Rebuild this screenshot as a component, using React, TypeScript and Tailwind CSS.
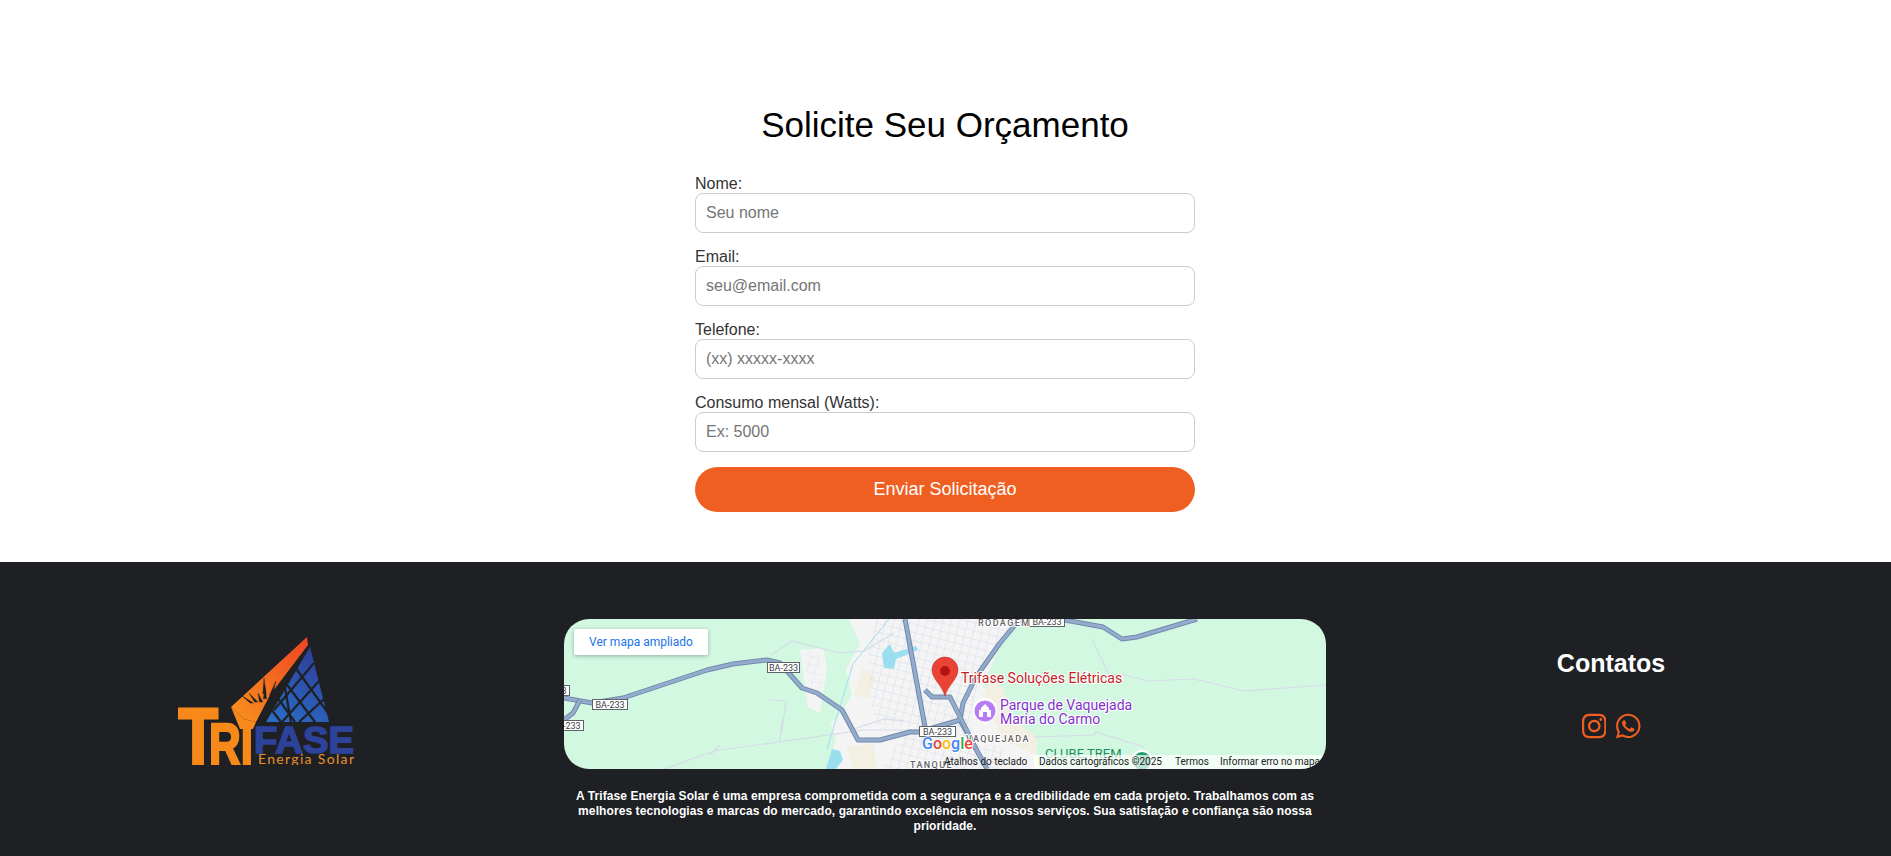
import { FaInstagram, FaWhatsapp } from "react-icons/fa"

const fields = [
  { label: "Nome:", placeholder: "Seu nome" },
  { label: "Email:", placeholder: "seu@email.com" },
  { label: "Telefone:", placeholder: "(xx) xxxxx-xxxx" },
  { label: "Consumo mensal (Watts):", placeholder: "Ex: 5000" },
]

const routeBadges = [
  { x: 203, y: 43, w: 32 },
  { x: 28, y: 80, w: 35 },
  { x: -16, y: 101, w: 35 },
  { x: -30, y: 66, w: 35 },
  { x: 355, y: 107, w: 36 },
  { x: 465, y: -3, w: 35 },
]

const mainRoads = [
  "M0 79 L28 84 L59 79 L143 51 L169 45 L203 41 L216 44 L238 69 L253 74 L278 91 L294 121 L316 121 L346 113 L372 113",
  "M16 81 L9 94 L0 101",
  "M341 0 L361 108",
  "M456 0 L436 24 L412 58 L399 84 L396 101 L423 150",
  "M361 71 L368 78 L386 78 L399 104 L412 130",
  "M355 113 L396 101",
  "M501 1 L539 8 L558 20 L573 18 L633 0",
]

const minorRoads = [
  "M100 150 L150 132 L300 111 L360 111",
  "M146 136 L156 126",
  "M205 81 L222 82 L218 112 M218 100 L216 122",
  "M470 118 L530 116 L532 113 L580 128",
  "M528 20 L545 56 L560 56 L585 62 L630 60 L680 72 L762 66",
  "M207 36 L228 22 L275 34 L300 32 L330 14",
  "M290 110 L320 100 L340 102",
]

function MapView() {
  return (
    <div className="relative h-[150px] w-[762px] overflow-hidden rounded-[25px] bg-[#d3f8e2]">
      <svg width="762" height="150" viewBox="0 0 762 150" className="block" fontFamily="Roboto, sans-serif">
        <defs>
          <pattern id="streets" width="8" height="8" patternUnits="userSpaceOnUse" patternTransform="rotate(14)">
            <path d="M8 0H0V8" fill="none" stroke="#d3dbe8" strokeWidth="1" />
          </pattern>
        </defs>

        {/* city area */}
        <path
          d="M285 0 L459 0 L436 24 L419 68 L446 100 L473 118 L473 150 L262 150 L272 120 L266 105 L276 96 L288 76 L282 50 L296 25 Z"
          fill="#f4f4f4"
        />
        <path d="M236 31 L259 29 L263 50 L256 94 L244 88 L240 60 Z" fill="#f4f4f4" />
        <path d="M298 50 L312 58 L304 80 L290 76 Z M282 128 L310 124 L312 150 L290 150 Z M425 60 L440 70 L448 100 L473 118 L473 136 L440 122 L420 80 Z" fill="#f3efe2" />

        {/* street grid */}
        <path
          d="M312 0 L450 0 L432 30 L415 64 L405 104 L416 125 L440 128 L440 150 L318 150 L335 122 L345 108 L310 104 L306 70 L304 40 Z"
          fill="url(#streets)"
        />
        <path d="M240 34 L256 32 L258 80 L246 76 Z" fill="url(#streets)" opacity="0.7" />

        {/* water */}
        <path d="M262 150 L268 130 L276 132 L279 141 L272 150 Z" fill="#9adff0" />
        <path d="M318 34 L326 25 L330 34 L352 27 L354 31 L332 40 L330 50 L320 49 Z" fill="#9adff0" />
        <path d="M263 130 L289 45 L325 0" fill="none" stroke="#9adff0" strokeWidth="1" />

        {minorRoads.map((d, i) => (
          <path key={i} d={d} fill="none" stroke="#d5dbe9" strokeWidth="1.2" />
        ))}

        {mainRoads.map((d, i) => (
          <g key={i}>
            <path d={d} fill="none" stroke="#7389aa" strokeWidth="5" strokeLinejoin="round" />
            <path d={d} fill="none" stroke="#93abcd" strokeWidth="3" strokeLinejoin="round" />
          </g>
        ))}

        {routeBadges.map((b, i) => (
          <g key={i}>
            <rect x={b.x + 0.5} y={b.y + 0.5} width={b.w} height="10" fill="#fff" stroke="#5f6368" />
            <text x={b.x + b.w / 2 + 0.5} y={b.y + 9} fontSize="9" fill="#3c4043" textAnchor="middle">
              BA-233
            </text>
          </g>
        ))}

        <g fontSize="9" fill="#5f6368" letterSpacing="1.4" fontWeight="500" stroke="#fff" strokeWidth="2" paintOrder="stroke">
          <text x="414" y="7">RODAGEM</text>
          <text x="402" y="123">VAQUEJADA</text>
          <text x="346" y="149">TANQUE</text>
        </g>

        {/* labels */}
        <text x="397" y="64" fontSize="14" fill="#c5221f" stroke="#fff" strokeWidth="2" paintOrder="stroke">
          Trifase Soluções Elétricas
        </text>
        <g fontSize="14" fill="#8430ce" stroke="#fff" strokeWidth="2" paintOrder="stroke">
          <text x="436" y="91">Parque de Vaquejada</text>
          <text x="436" y="105">Maria do Carmo</text>
        </g>
        <text x="481" y="139" fontSize="13" fill="#1e8e5e">CLUBE TREM</text>
        <circle cx="578" cy="142" r="10" fill="#1e9e6f" stroke="#fff" strokeWidth="2" />

        {/* park marker */}
        <path d="M421 106 L412 99 A12 12 0 1 1 430 99 Z" fill="#fff" />
        <circle cx="421" cy="92" r="10.5" fill="#b77cf5" />
        <path d="M415 98 V91 H417 V89 L421 85 L425 89 V91 H427 V98 Z M419 98 H423 V93 H419 Z" fill="#fff" fillRule="evenodd" />

        {/* pin */}
        <path d="M381 77 C378 66 368 60 368 51 A13 13 0 0 1 394 51 C394 60 384 66 381 77 Z" fill="#ea4335" stroke="#c5221f" strokeWidth="0.5" />
        <circle cx="381" cy="52" r="5" fill="#b31412" />

        <text x="358" y="130" fontSize="16" fontWeight="500" stroke="#fff" strokeWidth="1.5" paintOrder="stroke">
          <tspan fill="#4285f4">G</tspan>
          <tspan fill="#ea4335">o</tspan>
          <tspan fill="#fbbc05">o</tspan>
          <tspan fill="#4285f4">g</tspan>
          <tspan fill="#34a853">l</tspan>
          <tspan fill="#ea4335">e</tspan>
        </text>

        {/* attribution bar */}
        <rect x="470" y="136" width="292" height="14" fill="#fff" opacity="0.7" />
        <g fontSize="10" fill="#222">
          <text x="380" y="146">Atalhos do teclado</text>
          <text x="475" y="146">Dados cartográficos ©2025</text>
          <text x="611" y="146">Termos</text>
          <text x="656" y="146">Informar erro no mapa</text>
        </g>
      </svg>

      <button className="absolute left-[10px] top-[10px] h-[26px] w-[134px] rounded-[2px] bg-white font-['Roboto',sans-serif] text-[12px] text-[#1a73e8] shadow-[0_1px_4px_rgba(0,0,0,0.3)]">
        Ver mapa ampliado
      </button>
    </div>
  )
}

function Logo() {
  // tips of the sun rays, they all point back to the same centre
  const rays = [
    [63, 58], [71, 56], [80, 56], [87, 50], [86, 41], [98, 44], [100, 51],
  ]
  const cx = 87
  const cy = 76

  return (
    <svg width="177" height="128" viewBox="0 0 177 128" className="block">
      <defs>
        <linearGradient id="wing" x1="1" y1="0" x2="0" y2="1">
          <stop offset="0" stopColor="#ef4423" />
          <stop offset="1" stopColor="#f7941d" />
        </linearGradient>
        <linearGradient id="panel" x1="0.7" y1="0" x2="0.2" y2="1">
          <stop offset="0" stopColor="#2f3f9a" />
          <stop offset="1" stopColor="#2a6cc6" />
        </linearGradient>
      </defs>

      <path d="M129 0 L130 8 L92 58 L78 85 L66 82 L53 70 Z" fill="url(#wing)" />
      {rays.map(([x, y], i) => {
        const bx = x + (cx - x) * 0.45
        const by = y + (cy - y) * 0.45
        return <path key={i} d={`M${x} ${y} L${bx - 1.6} ${by} L${bx + 1.6} ${by} Z`} fill="#1e2024" stroke="#1e2024" strokeWidth="0.4" />
      })}

      <path d="M132 10 L151 85 L88 85 Z" fill="url(#panel)" />
      <g stroke="#1e2024" strokeWidth="2.2" fill="none">
        <path d="M136 26 L96 73 M106 45 L113 85 M141 44 L104 85 M146 62 L121 85" />
        <path d="M117 30 L150 76 M107 45 L137 85 M99 60 L117 85 M93 72 L103 85" />
      </g>

      <text x="0" y="128" fontSize="82" fontWeight="700" fontFamily="'Liberation Sans', sans-serif" fill="#f7891a" stroke="#f7891a" strokeWidth="3" textLength="40" lengthAdjust="spacingAndGlyphs">
        T
      </text>
      <text x="31" y="128" fontSize="60" fontWeight="700" fontFamily="'Liberation Sans', sans-serif" fill="#f7891a" stroke="#f7891a" strokeWidth="2.5" textLength="44" lengthAdjust="spacingAndGlyphs">
        RI
      </text>
      <path d="M53 70 L66 82 L78 85 L75 92 L62 92 Z" fill="#f7891a" />

      <text x="76" y="116" fontSize="37" fontWeight="700" fontFamily="'Liberation Sans', sans-serif" fill="#2d429b" stroke="#2d429b" strokeWidth="1.5" textLength="100" lengthAdjust="spacingAndGlyphs">
        FASE
      </text>
      <text x="80" y="127" fontSize="14" fontFamily="Lato, sans-serif" fill="#e8912b" textLength="96">
        Energia Solar
      </text>
    </svg>
  )
}

export default function App() {
  return (
    <div className="min-h-[856px] bg-white font-['Liberation_Sans',Arial,sans-serif]">
      <section className="flex flex-col items-center pt-[105px] pr-[1px] pb-[50px]">
        <h1 className="mb-[30px] text-center text-[35px] leading-[40px] font-normal text-black">
          Solicite Seu Orçamento
        </h1>

        <form className="flex w-[500px] flex-col">
          {fields.map((field) => (
            <div key={field.label} className="mb-[15px]">
              <label className="block text-[16px] leading-[18px] text-[#333]">{field.label}</label>
              <input
                placeholder={field.placeholder}
                className="block h-[40px] w-full rounded-[8px] border border-[#ccc] px-[10px] text-[16px] text-black outline-none placeholder:text-[#757575]"
              />
            </div>
          ))}

          <button type="button" className="h-[45px] w-full rounded-[25px] bg-[#f05f22] text-[18px] text-white">
            Enviar Solicitação
          </button>
        </form>
      </section>

      <footer className="flex h-[294px] bg-[#1e2024] pt-[57px] text-white">
        <div className="flex w-[532px] justify-center pt-[18px]">
          <Logo />
        </div>

        <div className="ml-[32px] w-[762px]">
          <MapView />
          <p className="mt-[20px] text-center text-[12px] leading-[15px] font-bold tracking-[0.09px]">
            A Trifase Energia Solar é uma empresa comprometida com a segurança e a credibilidade em cada projeto. Trabalhamos com as melhores tecnologias e marcas do mercado, garantindo excelência em nossos serviços. Sua satisfação e confiança são nossa prioridade.
          </p>
        </div>

        <div className="ml-[5px] flex flex-1 flex-col items-center pt-[30px]">
          <h3 className="text-[25px] leading-[29px] font-bold">Contatos</h3>
          <div className="mt-[34px] flex gap-[10px] text-[#f05f22]">
            <FaInstagram className="h-[28px] w-[24.5px]" />
            <FaWhatsapp className="h-[28px] w-[24.5px]" />
          </div>
        </div>
      </footer>
    </div>
  )
}
